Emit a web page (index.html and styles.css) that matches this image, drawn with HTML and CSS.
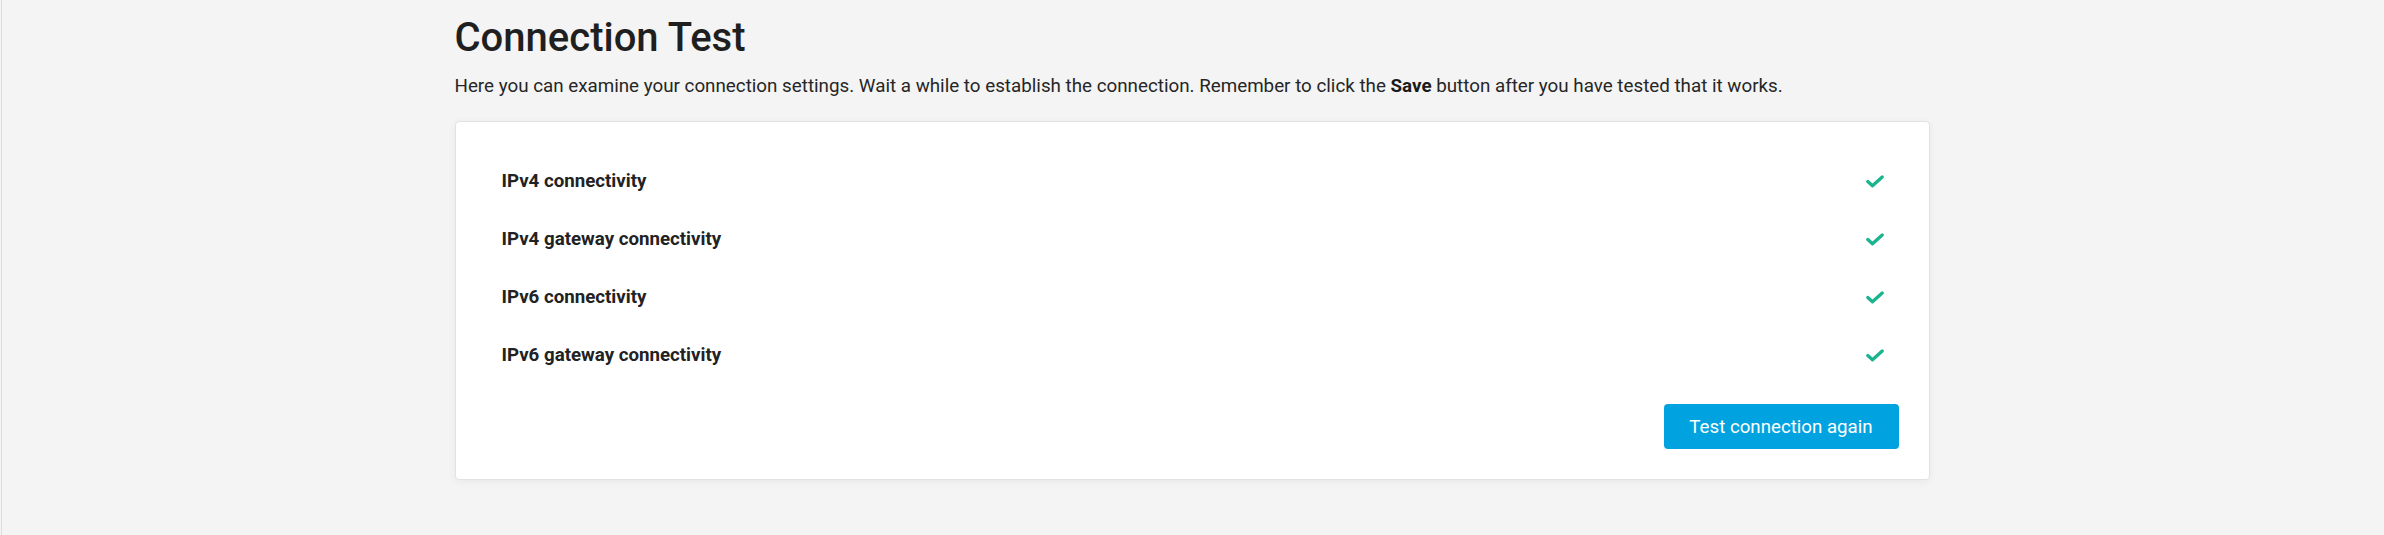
FILE: index.html
```html
<!DOCTYPE html>
<html lang="en">
<head>
<meta charset="utf-8">
<title>Connection Test</title>
<link rel="stylesheet" href="styles.css">
</head>
<body>
<div class="frame">
  <main class="page">
    <h1 class="title">Connection Test</h1>
    <p class="intro">Here you can examine your connection settings. Wait a while to establish the connection. Remember to click the <strong>Save</strong> button after you have tested that it works.</p>
    <section class="card">
      <ul class="tests">
        <li class="test"><span class="test-name">IPv4 connectivity</span><svg class="check" viewBox="0 0 18 13" width="18" height="13"><path d="M1.8 6.5 L6.5 10.8 L16.2 2" fill="none" stroke="currentColor" stroke-width="3.3" stroke-linecap="round" stroke-linejoin="round"/></svg></li>
        <li class="test"><span class="test-name">IPv4 gateway connectivity</span><svg class="check" viewBox="0 0 18 13" width="18" height="13"><path d="M1.8 6.5 L6.5 10.8 L16.2 2" fill="none" stroke="currentColor" stroke-width="3.3" stroke-linecap="round" stroke-linejoin="round"/></svg></li>
        <li class="test"><span class="test-name">IPv6 connectivity</span><svg class="check" viewBox="0 0 18 13" width="18" height="13"><path d="M1.8 6.5 L6.5 10.8 L16.2 2" fill="none" stroke="currentColor" stroke-width="3.3" stroke-linecap="round" stroke-linejoin="round"/></svg></li>
        <li class="test"><span class="test-name">IPv6 gateway connectivity</span><svg class="check" viewBox="0 0 18 13" width="18" height="13"><path d="M1.8 6.5 L6.5 10.8 L16.2 2" fill="none" stroke="currentColor" stroke-width="3.3" stroke-linecap="round" stroke-linejoin="round"/></svg></li>
      </ul>
      <div class="actions">
        <button class="btn" type="button">Test connection again</button>
      </div>
    </section>
  </main>
</div>
</body>
</html>
```

FILE: styles.css
```css
* { box-sizing: border-box; }
html, body {
  margin: 0;
  padding: 0;
  background: #f4f4f4;
  height: 100%;
}
body {
  font-family: Roboto, "Liberation Sans", Arial, sans-serif;
  color: #212121;
}
.frame {
  min-height: 100%;
  margin-left: 1px;
  padding-right: 2px;
  border-left: 1px solid #dcdcdc;
}
.page {
  width: 1475px;
  margin: 0 auto;
  padding-top: 14px;
}
.title {
  margin: 0;
  font-size: 40px;
  line-height: 48px;
  font-weight: 500;
  color: #1f1f1f;
}
.intro {
  margin: 11px 0 0;
  font-size: 18.8px;
  line-height: 27px;
  color: #262626;
}
.intro strong { font-weight: 700; color: #1a1a1a; }
.card {
  margin-top: 21px;
  background: #fff;
  border: 1px solid #e2e2e2;
  border-radius: 4px;
  box-shadow: 0 2px 8px rgba(0,0,0,0.05);
  padding: 30px;
}
.tests {
  list-style: none;
  margin: 0;
  padding: 0;
}
.test {
  display: flex;
  align-items: center;
  justify-content: space-between;
  height: 58px;
  padding: 0 15px 0 16px;
}
.test-name {
  font-size: 18.7px;
  font-weight: 700;
  color: #222;
}
.check {
  color: #1ab58f;
  display: block;
}
.actions {
  display: flex;
  justify-content: flex-end;
  margin-top: 20px;
}
.btn {
  font-family: inherit;
  font-size: 18.7px;
  color: #fff;
  background: #00a3e0;
  border: 0;
  border-radius: 4px;
  width: 235px;
  height: 45px;
  cursor: pointer;
}
```
